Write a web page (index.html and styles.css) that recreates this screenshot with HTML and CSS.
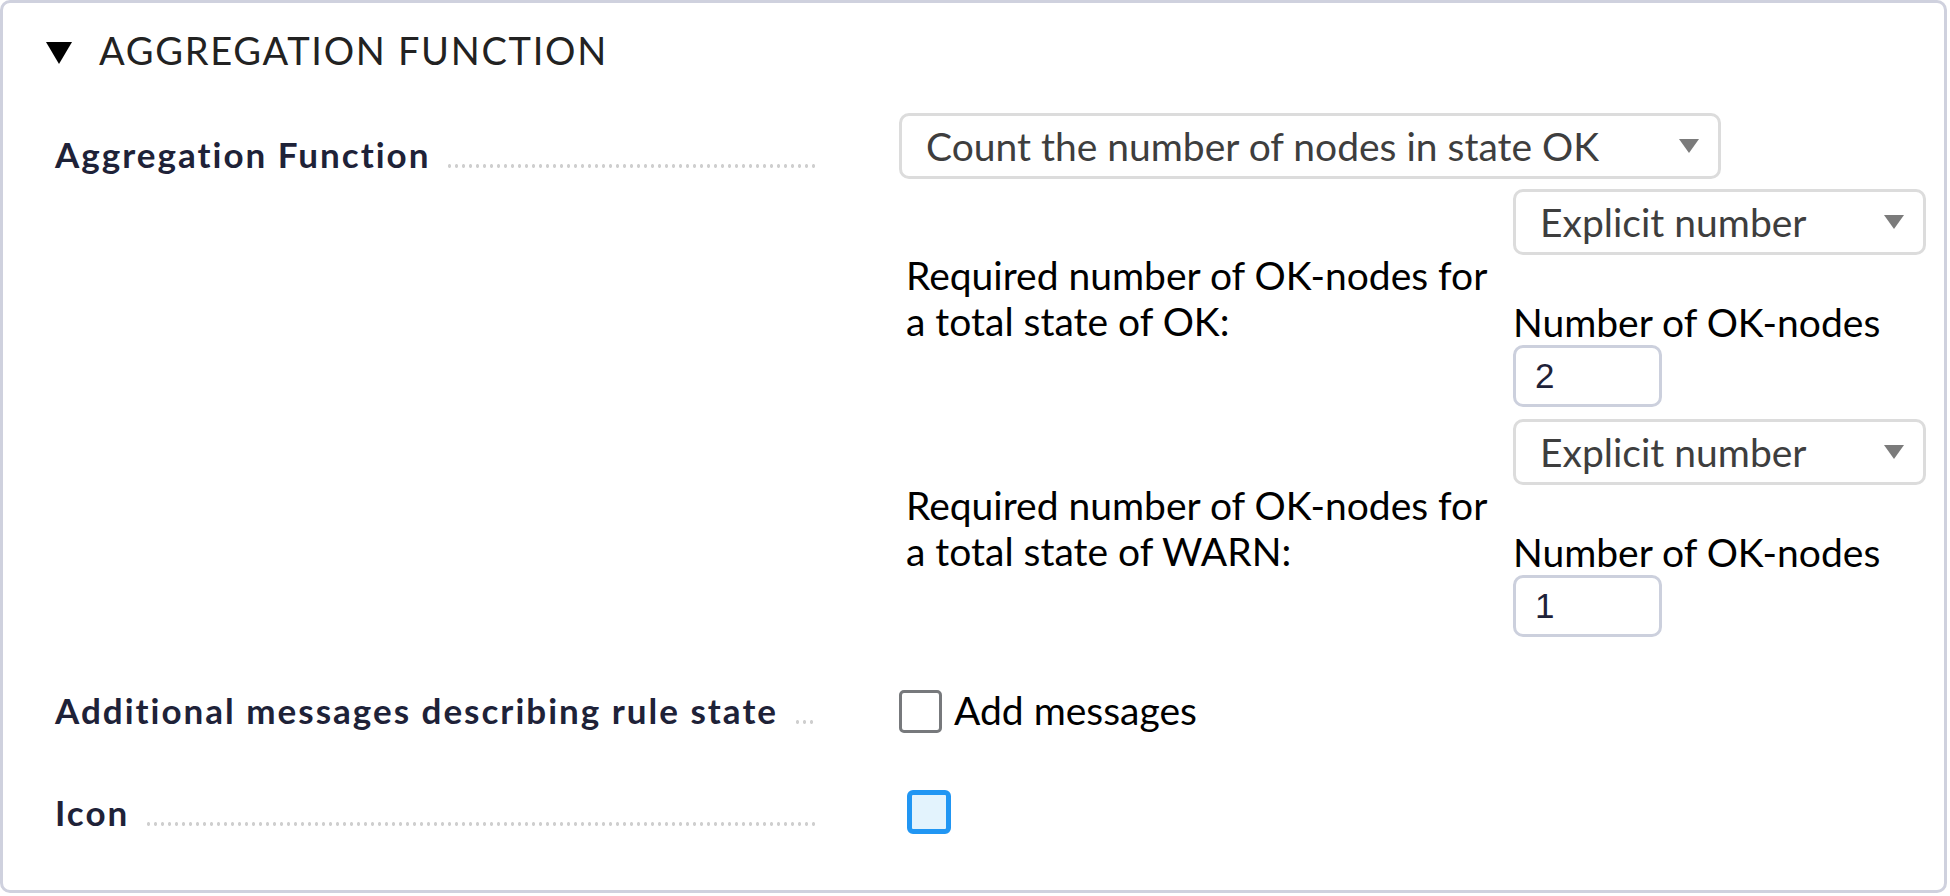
FILE: index.html
```html
<!DOCTYPE html>
<html lang="en">
<head>
<meta charset="utf-8">
<title>Aggregation Function</title>
<link rel="stylesheet" href="styles.css">
</head>
<body>
<div class="panel">
  <div class="panel-head">
    <svg class="tri" width="26" height="22" viewBox="0 0 26 22"><polygon points="0,0 26,0 13,22" fill="#000"/></svg>
    <span class="panel-title">AGGREGATION FUNCTION</span>
  </div>

  <div class="form">
    <div class="row row-top">
      <div class="legend"><span class="lbl">Aggregation Function</span><span class="dots"></span></div>
      <div class="content">
        <div class="select select-wide"><span>Count the number of nodes in state OK</span><svg class="arrow" width="20" height="14" viewBox="0 0 20 14"><polygon points="0,0 20,0 10,14" fill="#7b7b7b"/></svg></div>
        <div class="sub">
          <div class="sub-row">
            <div class="sub-label">Required number of OK-nodes for<br>a total state of OK:</div>
            <div class="sub-value">
              <div class="select select-narrow"><span>Explicit number</span><svg class="arrow" width="20" height="14" viewBox="0 0 20 14"><polygon points="0,0 20,0 10,14" fill="#7b7b7b"/></svg></div>
              <div class="caption">Number of OK-nodes</div>
              <div class="num-input">2</div>
            </div>
          </div>
          <div class="sub-row">
            <div class="sub-label">Required number of OK-nodes for<br>a total state of WARN:</div>
            <div class="sub-value">
              <div class="select select-narrow"><span>Explicit number</span><svg class="arrow" width="20" height="14" viewBox="0 0 20 14"><polygon points="0,0 20,0 10,14" fill="#7b7b7b"/></svg></div>
              <div class="caption">Number of OK-nodes</div>
              <div class="num-input">1</div>
            </div>
          </div>
        </div>
      </div>
    </div>

    <div class="row row-center row-msg">
      <div class="legend"><span class="lbl">Additional messages describing rule state</span><span class="dots"></span></div>
      <div class="content check-line">
        <span class="checkbox"></span><span class="check-text">Add messages</span>
      </div>
    </div>

    <div class="row row-center row-icon">
      <div class="legend"><span class="lbl">Icon</span><span class="dots"></span></div>
      <div class="content">
        <span class="icon-box"></span>
      </div>
    </div>
  </div>
</div>
</body>
</html>
```

FILE: styles.css
```css
html, body {
  margin: 0;
  padding: 0;
  background: #ffffff;
}

body {
  font-family: Lato, "Noto Sans", sans-serif;
  color: #000;
}

.panel {
  width: 1947px;
  height: 893px;
  box-sizing: border-box;
  border: 3px solid #cfd1de;
  border-radius: 10px;
  padding-top: 24px;
}

.panel-head {
  display: flex;
  align-items: center;
  height: 46px;
  padding-left: 43px;
}

.tri {
  display: block;
  margin-right: 27px;
  margin-top: 6px;
}

.panel-title {
  font-size: 38px;
  line-height: 46px;
  letter-spacing: 1.7px;
  color: #222;
}

.form {
  margin-top: 40px;
}

.row {
  display: grid;
  grid-template-columns: 760px 1fr;
  column-gap: 84px;
  align-items: baseline;
  padding-left: 52px;
}

.row-top {
  align-items: start;
}

.row-top .legend {
  padding-top: 18px;
}

.row-center {
  align-items: center;
}

.row-msg {
  margin-top: 43px;
}

.row-icon {
  margin-top: 56px;
}

.legend {
  display: flex;
  align-items: baseline;
}

.lbl {
  font-weight: 700;
  font-size: 35px;
  line-height: 46px;
  letter-spacing: 2px;
  color: #1e2238;
  white-space: nowrap;
}

.dots {
  flex: 1;
  height: 4px;
  margin-left: 16px;
  background-image: radial-gradient(circle, #cfcfcf 1.6px, transparent 2px);
  background-size: 7px 4px;
  background-repeat: repeat-x;
}

.content {
  font-size: 39px;
  line-height: 46px;
}

.select {
  display: flex;
  align-items: center;
  justify-content: space-between;
  box-sizing: border-box;
  height: 66px;
  border: 3px solid #dcdcdc;
  border-radius: 10px;
  padding: 0 19px 0 24px;
  color: #3e3e3e;
  background: #fff;
}

.select-wide {
  width: 822px;
}

.select-narrow {
  width: 413px;
}

.arrow {
  display: block;
  flex: none;
}

.sub {
  margin-top: 4px;
}

.sub-row {
  display: grid;
  grid-template-columns: 607px auto;
  align-items: center;
  padding: 6px 0 6px 7px;
}

.sub-label {
  color: #000;
}

.caption {
  margin-top: 44px;
  color: #000;
}

.num-input {
  box-sizing: border-box;
  width: 149px;
  height: 62px;
  border: 3px solid #ccd0dd;
  border-radius: 10px;
  padding-left: 19px;
  font-family: "Liberation Sans", Arial, sans-serif;
  font-size: 35px;
  line-height: 56px;
  color: #1e2238;
}

.check-line {
  display: flex;
  align-items: center;
}

.checkbox {
  display: block;
  box-sizing: border-box;
  width: 43px;
  height: 43px;
  border: 3px solid #77797c;
  border-radius: 5px;
  margin-right: 12px;
  margin-top: 4px;
}

.check-text {
  color: #000;
}

.icon-box {
  display: block;
  box-sizing: border-box;
  width: 44px;
  height: 44px;
  margin-left: 8px;
  border: 5px solid #2196f3;
  border-radius: 6px;
  background: #e3f3fd;
}
```
